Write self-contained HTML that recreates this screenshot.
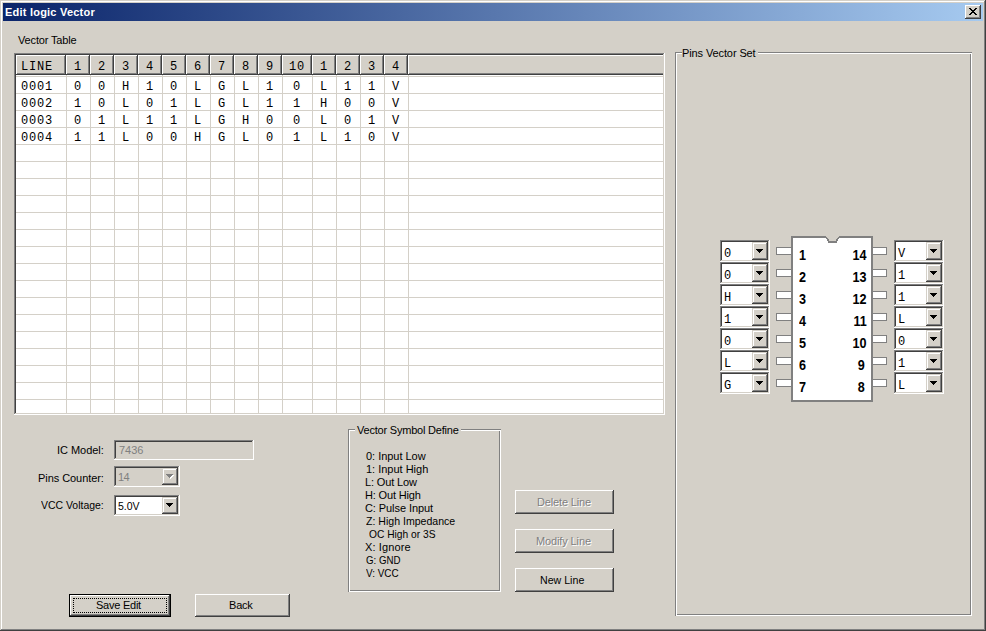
<!DOCTYPE html>
<html><head><meta charset="utf-8">
<style>
*{box-sizing:border-box;margin:0;padding:0}
html,body{width:986px;height:631px;overflow:hidden;background:#d4d0c8}
body{position:relative;font-family:"Liberation Sans",sans-serif;font-size:11px;color:#000}
.a{position:absolute}
.t{position:absolute;white-space:nowrap;line-height:13px}
.win{left:0;top:0;width:986px;height:631px;background:#d4d0c8;
 box-shadow:inset -1px -1px #404040, inset 1px 1px #d4d0c8, inset -2px -2px #808080, inset 2px 2px #fff}
.title{left:3px;top:3px;width:980px;height:18px;background:linear-gradient(to right,#0a246a,#a6caf0)}
.raised{position:absolute;background:#d4d0c8;box-shadow:inset -1px -1px #404040, inset 1px 1px #fff, inset -2px -2px #808080}
.sunken{position:absolute;box-shadow:inset -1px -1px #fff, inset 1px 1px #808080, inset -2px -2px #d4d0c8, inset 2px 2px #404040}
.etched{position:absolute;box-shadow:inset 1px 1px #808080, inset -1px -1px #fff, inset 2px 2px #fff, inset -2px -2px #808080}
.mono{font-family:"Liberation Mono",monospace;font-size:12px;letter-spacing:0.8px}
.hc{position:absolute;top:0;height:20px;line-height:20px;padding-top:2px;text-align:center;background:#d4d0c8;white-space:nowrap;
 box-shadow:inset -1px -1px #404040, inset 1px 1px #fff, inset -2px -2px #808080}
.dc{position:absolute;height:17px;line-height:17px;padding-top:3px;text-align:center;white-space:nowrap}
.dis{color:#808080;text-shadow:1px 1px 0 #fff}
.cbtn{position:absolute;background:#d4d0c8;box-shadow:inset -1px -1px #404040, inset 1px 1px #d4d0c8, inset -2px -2px #808080, inset 2px 2px #fff}
.arr{position:absolute;width:7px;height:4px}
.hl{position:absolute;height:1px;background:#d4d0c8}
.vl{position:absolute;width:1px;background:#d4d0c8}
.pin{position:absolute;width:16px;height:8px;background:#fff;border:1px solid #808080}
.pn{position:absolute;font-weight:bold;font-size:14px;line-height:14px;white-space:nowrap;transform:scaleX(0.9)}
</style></head><body>
<div class="a win"></div>
<div class="a title"></div>

<div class="t" style="left:5px;top:6px;letter-spacing:0.22px;font-family:'Liberation Sans',sans-serif;font-size:11px;font-weight:bold;color:#fff;">Edit logic Vector</div>
<div class="raised" style="left:965px;top:5px;width:16px;height:14px"></div>
<svg class="a" style="left:969px;top:8px" width="8" height="7" viewBox="0 0 8 7" shape-rendering="crispEdges"><path fill="#000" d="M0 0h2v1h-2zM6 0h2v1h-2zM1 1h2v1h-2zM5 1h2v1h-2zM2 2h4v1h-4zM3 3h2v1h-2zM2 4h4v1h-4zM1 5h2v1h-2zM5 5h2v1h-2zM0 6h2v1h-2zM6 6h2v1h-2z"/></svg>
<div class="t" style="left:18px;top:34px;letter-spacing:-0.15px;font-family:'Liberation Sans',sans-serif;font-size:11px;">Vector Table</div>
<div class="sunken" style="left:14px;top:53px;width:651px;height:362px"></div>
<div class="a mono" style="left:16px;top:55px;width:647px;height:358px;background:#fff;overflow:hidden">
<div class="hl" style="left:0;top:21px;width:647px"></div>
<div class="hl" style="left:0;top:38px;width:647px"></div>
<div class="hl" style="left:0;top:55px;width:647px"></div>
<div class="hl" style="left:0;top:72px;width:647px"></div>
<div class="hl" style="left:0;top:89px;width:647px"></div>
<div class="hl" style="left:0;top:106px;width:647px"></div>
<div class="hl" style="left:0;top:123px;width:647px"></div>
<div class="hl" style="left:0;top:140px;width:647px"></div>
<div class="hl" style="left:0;top:157px;width:647px"></div>
<div class="hl" style="left:0;top:174px;width:647px"></div>
<div class="hl" style="left:0;top:191px;width:647px"></div>
<div class="hl" style="left:0;top:208px;width:647px"></div>
<div class="hl" style="left:0;top:225px;width:647px"></div>
<div class="hl" style="left:0;top:242px;width:647px"></div>
<div class="hl" style="left:0;top:259px;width:647px"></div>
<div class="hl" style="left:0;top:276px;width:647px"></div>
<div class="hl" style="left:0;top:293px;width:647px"></div>
<div class="hl" style="left:0;top:310px;width:647px"></div>
<div class="hl" style="left:0;top:327px;width:647px"></div>
<div class="hl" style="left:0;top:344px;width:647px"></div>
<div class="vl" style="left:50px;top:20px;height:340px"></div>
<div class="vl" style="left:74px;top:20px;height:340px"></div>
<div class="vl" style="left:98px;top:20px;height:340px"></div>
<div class="vl" style="left:122px;top:20px;height:340px"></div>
<div class="vl" style="left:146px;top:20px;height:340px"></div>
<div class="vl" style="left:170px;top:20px;height:340px"></div>
<div class="vl" style="left:194px;top:20px;height:340px"></div>
<div class="vl" style="left:218px;top:20px;height:340px"></div>
<div class="vl" style="left:242px;top:20px;height:340px"></div>
<div class="vl" style="left:266px;top:20px;height:340px"></div>
<div class="vl" style="left:296px;top:20px;height:340px"></div>
<div class="vl" style="left:320px;top:20px;height:340px"></div>
<div class="vl" style="left:344px;top:20px;height:340px"></div>
<div class="vl" style="left:368px;top:20px;height:340px"></div>
<div class="vl" style="left:392px;top:20px;height:340px"></div>
<div class="hc" style="left:0px;width:50px;text-align:left;padding-left:5px">LINE</div>
<div class="hc" style="left:50px;width:24px">1</div>
<div class="hc" style="left:74px;width:24px">2</div>
<div class="hc" style="left:98px;width:24px">3</div>
<div class="hc" style="left:122px;width:24px">4</div>
<div class="hc" style="left:146px;width:24px">5</div>
<div class="hc" style="left:170px;width:24px">6</div>
<div class="hc" style="left:194px;width:24px">7</div>
<div class="hc" style="left:218px;width:24px">8</div>
<div class="hc" style="left:242px;width:24px">9</div>
<div class="hc" style="left:266px;width:30px">10</div>
<div class="hc" style="left:296px;width:24px">1</div>
<div class="hc" style="left:320px;width:24px">2</div>
<div class="hc" style="left:344px;width:24px">3</div>
<div class="hc" style="left:368px;width:24px">4</div>
<div class="hc" style="left:392px;width:300px"></div>
<div class="dc" style="left:0px;top:21px;width:50px;text-align:left;padding-left:5px">0001</div>
<div class="dc" style="left:50px;top:21px;width:24px">0</div>
<div class="dc" style="left:74px;top:21px;width:24px">0</div>
<div class="dc" style="left:98px;top:21px;width:24px">H</div>
<div class="dc" style="left:122px;top:21px;width:24px">1</div>
<div class="dc" style="left:146px;top:21px;width:24px">0</div>
<div class="dc" style="left:170px;top:21px;width:24px">L</div>
<div class="dc" style="left:194px;top:21px;width:24px">G</div>
<div class="dc" style="left:218px;top:21px;width:24px">L</div>
<div class="dc" style="left:242px;top:21px;width:24px">1</div>
<div class="dc" style="left:266px;top:21px;width:30px">0</div>
<div class="dc" style="left:296px;top:21px;width:24px">L</div>
<div class="dc" style="left:320px;top:21px;width:24px">1</div>
<div class="dc" style="left:344px;top:21px;width:24px">1</div>
<div class="dc" style="left:368px;top:21px;width:24px">V</div>
<div class="dc" style="left:0px;top:38px;width:50px;text-align:left;padding-left:5px">0002</div>
<div class="dc" style="left:50px;top:38px;width:24px">1</div>
<div class="dc" style="left:74px;top:38px;width:24px">0</div>
<div class="dc" style="left:98px;top:38px;width:24px">L</div>
<div class="dc" style="left:122px;top:38px;width:24px">0</div>
<div class="dc" style="left:146px;top:38px;width:24px">1</div>
<div class="dc" style="left:170px;top:38px;width:24px">L</div>
<div class="dc" style="left:194px;top:38px;width:24px">G</div>
<div class="dc" style="left:218px;top:38px;width:24px">L</div>
<div class="dc" style="left:242px;top:38px;width:24px">1</div>
<div class="dc" style="left:266px;top:38px;width:30px">1</div>
<div class="dc" style="left:296px;top:38px;width:24px">H</div>
<div class="dc" style="left:320px;top:38px;width:24px">0</div>
<div class="dc" style="left:344px;top:38px;width:24px">0</div>
<div class="dc" style="left:368px;top:38px;width:24px">V</div>
<div class="dc" style="left:0px;top:55px;width:50px;text-align:left;padding-left:5px">0003</div>
<div class="dc" style="left:50px;top:55px;width:24px">0</div>
<div class="dc" style="left:74px;top:55px;width:24px">1</div>
<div class="dc" style="left:98px;top:55px;width:24px">L</div>
<div class="dc" style="left:122px;top:55px;width:24px">1</div>
<div class="dc" style="left:146px;top:55px;width:24px">1</div>
<div class="dc" style="left:170px;top:55px;width:24px">L</div>
<div class="dc" style="left:194px;top:55px;width:24px">G</div>
<div class="dc" style="left:218px;top:55px;width:24px">H</div>
<div class="dc" style="left:242px;top:55px;width:24px">0</div>
<div class="dc" style="left:266px;top:55px;width:30px">0</div>
<div class="dc" style="left:296px;top:55px;width:24px">L</div>
<div class="dc" style="left:320px;top:55px;width:24px">0</div>
<div class="dc" style="left:344px;top:55px;width:24px">1</div>
<div class="dc" style="left:368px;top:55px;width:24px">V</div>
<div class="dc" style="left:0px;top:72px;width:50px;text-align:left;padding-left:5px">0004</div>
<div class="dc" style="left:50px;top:72px;width:24px">1</div>
<div class="dc" style="left:74px;top:72px;width:24px">1</div>
<div class="dc" style="left:98px;top:72px;width:24px">L</div>
<div class="dc" style="left:122px;top:72px;width:24px">0</div>
<div class="dc" style="left:146px;top:72px;width:24px">0</div>
<div class="dc" style="left:170px;top:72px;width:24px">H</div>
<div class="dc" style="left:194px;top:72px;width:24px">G</div>
<div class="dc" style="left:218px;top:72px;width:24px">L</div>
<div class="dc" style="left:242px;top:72px;width:24px">0</div>
<div class="dc" style="left:266px;top:72px;width:30px">1</div>
<div class="dc" style="left:296px;top:72px;width:24px">L</div>
<div class="dc" style="left:320px;top:72px;width:24px">1</div>
<div class="dc" style="left:344px;top:72px;width:24px">0</div>
<div class="dc" style="left:368px;top:72px;width:24px">V</div>
</div>
<div class="t" style="left:57px;top:444px;letter-spacing:-0.03px;font-family:'Liberation Sans',sans-serif;font-size:11px;">IC Model:</div>
<div class="t" style="left:38px;top:472px;letter-spacing:-0.06px;font-family:'Liberation Sans',sans-serif;font-size:11px;">Pins Counter:</div>
<div class="t" style="left:41px;top:499px;letter-spacing:0.0px;transform-origin:0 0;transform:scaleX(0.95);font-family:'Liberation Sans',sans-serif;font-size:11px;">VCC Voltage:</div>
<div class="sunken" style="left:114px;top:440px;width:140px;height:20px;background:#d4d0c8"></div>
<div class="t" style="left:119px;top:444px;letter-spacing:-0.0px;font-family:'Liberation Sans',sans-serif;font-size:11px;color:#808080;">7436</div>
<div class="sunken" style="left:114px;top:466px;width:66px;height:21px;background:#d4d0c8"></div>
<div class="cbtn" style="left:162px;top:468px;width:16px;height:17px"></div>
<svg class="arr" style="left:167px;top:475px" viewBox="0 0 7 4" shape-rendering="crispEdges"><path fill="#fff" d="M0 0h7v1h-1v1h-1v1h-1v1h-1v-1h-1v-1h-1v-1h-1z"/></svg>
<svg class="arr" style="left:166px;top:474px" viewBox="0 0 7 4" shape-rendering="crispEdges"><path fill="#808080" d="M0 0h7v1h-1v1h-1v1h-1v1h-1v-1h-1v-1h-1v-1h-1z"/></svg>
<div class="t" style="left:118px;top:471px;letter-spacing:-0.6px;font-family:'Liberation Sans',sans-serif;font-size:11px;color:#808080;">14</div>
<div class="sunken" style="left:114px;top:495px;width:66px;height:21px;background:#fff"></div>
<div class="cbtn" style="left:162px;top:497px;width:16px;height:17px"></div>
<svg class="arr" style="left:166px;top:503px" viewBox="0 0 7 4" shape-rendering="crispEdges"><path fill="#000" d="M0 0h7v1h-1v1h-1v1h-1v1h-1v-1h-1v-1h-1v-1h-1z"/></svg>
<div class="t" style="left:118px;top:500px;letter-spacing:0.0px;transform-origin:0 0;transform:scaleX(0.956);font-family:'Liberation Sans',sans-serif;font-size:11px;">5.0V</div>
<div class="etched" style="left:348px;top:429px;width:153px;height:163px"></div>
<div class="a" style="left:355px;top:425px;width:106px;height:9px;background:#d4d0c8"></div>
<div class="t" style="left:357px;top:424px;letter-spacing:-0.21px;font-family:'Liberation Sans',sans-serif;font-size:11px;">Vector Symbol Define</div>
<div class="t" style="left:366px;top:450px;letter-spacing:-0.03px;font-family:'Liberation Sans',sans-serif;font-size:11px;">0: Input Low</div>
<div class="t" style="left:366px;top:463px;letter-spacing:-0.01px;font-family:'Liberation Sans',sans-serif;font-size:11px;">1: Input High</div>
<div class="t" style="left:365px;top:476px;letter-spacing:-0.13px;font-family:'Liberation Sans',sans-serif;font-size:11px;">L: Out Low</div>
<div class="t" style="left:365px;top:489px;letter-spacing:-0.16px;font-family:'Liberation Sans',sans-serif;font-size:11px;">H: Out High</div>
<div class="t" style="left:365px;top:502px;letter-spacing:-0.08px;font-family:'Liberation Sans',sans-serif;font-size:11px;">C: Pulse Input</div>
<div class="t" style="left:366px;top:515px;letter-spacing:0.0px;transform-origin:0 0;transform:scaleX(0.96);font-family:'Liberation Sans',sans-serif;font-size:11px;">Z: High Impedance</div>
<div class="t" style="left:369px;top:528px;letter-spacing:0.0px;transform-origin:0 0;transform:scaleX(0.93);font-family:'Liberation Sans',sans-serif;font-size:11px;">OC High or 3S</div>
<div class="t" style="left:365px;top:541px;letter-spacing:0.13px;font-family:'Liberation Sans',sans-serif;font-size:11px;">X: Ignore</div>
<div class="t" style="left:366px;top:554px;letter-spacing:0.0px;transform-origin:0 0;transform:scaleX(0.88);font-family:'Liberation Sans',sans-serif;font-size:11px;">G: GND</div>
<div class="t" style="left:366px;top:567px;letter-spacing:0.0px;transform-origin:0 0;transform:scaleX(0.901);font-family:'Liberation Sans',sans-serif;font-size:11px;">V: VCC</div>
<div class="raised" style="left:515px;top:490px;width:99px;height:24px"></div>
<div class="t" style="left:537px;top:496px;letter-spacing:-0.15px;font-family:'Liberation Sans',sans-serif;font-size:11px;color:#808080;text-shadow:1px 1px 0 #fff;">Delete Line</div>
<div class="raised" style="left:515px;top:529px;width:99px;height:24px"></div>
<div class="t" style="left:536px;top:535px;letter-spacing:-0.12px;font-family:'Liberation Sans',sans-serif;font-size:11px;color:#808080;text-shadow:1px 1px 0 #fff;">Modify Line</div>
<div class="raised" style="left:515px;top:568px;width:99px;height:24px"></div>
<div class="t" style="left:540px;top:574px;letter-spacing:0.0px;transform-origin:0 0;transform:scaleX(0.966);font-family:'Liberation Sans',sans-serif;font-size:11px;">New Line</div>
<div class="a" style="left:69px;top:594px;width:102px;height:23px;border:1px solid #000"></div>
<div class="raised" style="left:70px;top:595px;width:100px;height:21px"></div>
<div class="a" style="left:73px;top:598px;width:94px;height:15px;border:1px dotted #000"></div>
<div class="t" style="left:96px;top:599px;letter-spacing:-0.24px;font-family:'Liberation Sans',sans-serif;font-size:11px;">Save Edit</div>
<div class="raised" style="left:195px;top:594px;width:95px;height:23px"></div>
<div class="t" style="left:229px;top:599px;letter-spacing:-0.21px;font-family:'Liberation Sans',sans-serif;font-size:11px;">Back</div>
<div class="etched" style="left:675px;top:52px;width:297px;height:564px"></div>
<div class="a" style="left:682px;top:48px;width:76px;height:9px;background:#d4d0c8"></div>
<div class="t" style="left:682px;top:47px;letter-spacing:-0.11px;font-family:'Liberation Sans',sans-serif;font-size:11px;">Pins Vector Set</div>
<div class="sunken" style="left:720px;top:240px;width:50px;height:22px;background:#fff"></div>
<div class="cbtn" style="left:752px;top:242px;width:16px;height:18px"></div>
<svg class="arr" style="left:756px;top:249px" viewBox="0 0 7 4" shape-rendering="crispEdges"><path fill="#000" d="M0 0h7v1h-1v1h-1v1h-1v1h-1v-1h-1v-1h-1v-1h-1z"/></svg>
<div class="t mono" style="left:724px;top:248px">0</div>
<div class="sunken" style="left:894px;top:240px;width:50px;height:22px;background:#fff"></div>
<div class="cbtn" style="left:926px;top:242px;width:16px;height:18px"></div>
<svg class="arr" style="left:930px;top:249px" viewBox="0 0 7 4" shape-rendering="crispEdges"><path fill="#000" d="M0 0h7v1h-1v1h-1v1h-1v1h-1v-1h-1v-1h-1v-1h-1z"/></svg>
<div class="t mono" style="left:898px;top:248px">V</div>
<div class="pin" style="left:776px;top:247px"></div>
<div class="pin" style="left:871px;top:247px"></div>
<div class="sunken" style="left:720px;top:262px;width:50px;height:22px;background:#fff"></div>
<div class="cbtn" style="left:752px;top:264px;width:16px;height:18px"></div>
<svg class="arr" style="left:756px;top:271px" viewBox="0 0 7 4" shape-rendering="crispEdges"><path fill="#000" d="M0 0h7v1h-1v1h-1v1h-1v1h-1v-1h-1v-1h-1v-1h-1z"/></svg>
<div class="t mono" style="left:724px;top:270px">0</div>
<div class="sunken" style="left:894px;top:262px;width:50px;height:22px;background:#fff"></div>
<div class="cbtn" style="left:926px;top:264px;width:16px;height:18px"></div>
<svg class="arr" style="left:930px;top:271px" viewBox="0 0 7 4" shape-rendering="crispEdges"><path fill="#000" d="M0 0h7v1h-1v1h-1v1h-1v1h-1v-1h-1v-1h-1v-1h-1z"/></svg>
<div class="t mono" style="left:898px;top:270px">1</div>
<div class="pin" style="left:776px;top:269px"></div>
<div class="pin" style="left:871px;top:269px"></div>
<div class="sunken" style="left:720px;top:284px;width:50px;height:22px;background:#fff"></div>
<div class="cbtn" style="left:752px;top:286px;width:16px;height:18px"></div>
<svg class="arr" style="left:756px;top:293px" viewBox="0 0 7 4" shape-rendering="crispEdges"><path fill="#000" d="M0 0h7v1h-1v1h-1v1h-1v1h-1v-1h-1v-1h-1v-1h-1z"/></svg>
<div class="t mono" style="left:724px;top:292px">H</div>
<div class="sunken" style="left:894px;top:284px;width:50px;height:22px;background:#fff"></div>
<div class="cbtn" style="left:926px;top:286px;width:16px;height:18px"></div>
<svg class="arr" style="left:930px;top:293px" viewBox="0 0 7 4" shape-rendering="crispEdges"><path fill="#000" d="M0 0h7v1h-1v1h-1v1h-1v1h-1v-1h-1v-1h-1v-1h-1z"/></svg>
<div class="t mono" style="left:898px;top:292px">1</div>
<div class="pin" style="left:776px;top:291px"></div>
<div class="pin" style="left:871px;top:291px"></div>
<div class="sunken" style="left:720px;top:306px;width:50px;height:22px;background:#fff"></div>
<div class="cbtn" style="left:752px;top:308px;width:16px;height:18px"></div>
<svg class="arr" style="left:756px;top:315px" viewBox="0 0 7 4" shape-rendering="crispEdges"><path fill="#000" d="M0 0h7v1h-1v1h-1v1h-1v1h-1v-1h-1v-1h-1v-1h-1z"/></svg>
<div class="t mono" style="left:724px;top:314px">1</div>
<div class="sunken" style="left:894px;top:306px;width:50px;height:22px;background:#fff"></div>
<div class="cbtn" style="left:926px;top:308px;width:16px;height:18px"></div>
<svg class="arr" style="left:930px;top:315px" viewBox="0 0 7 4" shape-rendering="crispEdges"><path fill="#000" d="M0 0h7v1h-1v1h-1v1h-1v1h-1v-1h-1v-1h-1v-1h-1z"/></svg>
<div class="t mono" style="left:898px;top:314px">L</div>
<div class="pin" style="left:776px;top:313px"></div>
<div class="pin" style="left:871px;top:313px"></div>
<div class="sunken" style="left:720px;top:328px;width:50px;height:22px;background:#fff"></div>
<div class="cbtn" style="left:752px;top:330px;width:16px;height:18px"></div>
<svg class="arr" style="left:756px;top:337px" viewBox="0 0 7 4" shape-rendering="crispEdges"><path fill="#000" d="M0 0h7v1h-1v1h-1v1h-1v1h-1v-1h-1v-1h-1v-1h-1z"/></svg>
<div class="t mono" style="left:724px;top:336px">0</div>
<div class="sunken" style="left:894px;top:328px;width:50px;height:22px;background:#fff"></div>
<div class="cbtn" style="left:926px;top:330px;width:16px;height:18px"></div>
<svg class="arr" style="left:930px;top:337px" viewBox="0 0 7 4" shape-rendering="crispEdges"><path fill="#000" d="M0 0h7v1h-1v1h-1v1h-1v1h-1v-1h-1v-1h-1v-1h-1z"/></svg>
<div class="t mono" style="left:898px;top:336px">0</div>
<div class="pin" style="left:776px;top:335px"></div>
<div class="pin" style="left:871px;top:335px"></div>
<div class="sunken" style="left:720px;top:350px;width:50px;height:22px;background:#fff"></div>
<div class="cbtn" style="left:752px;top:352px;width:16px;height:18px"></div>
<svg class="arr" style="left:756px;top:359px" viewBox="0 0 7 4" shape-rendering="crispEdges"><path fill="#000" d="M0 0h7v1h-1v1h-1v1h-1v1h-1v-1h-1v-1h-1v-1h-1z"/></svg>
<div class="t mono" style="left:724px;top:358px">L</div>
<div class="sunken" style="left:894px;top:350px;width:50px;height:22px;background:#fff"></div>
<div class="cbtn" style="left:926px;top:352px;width:16px;height:18px"></div>
<svg class="arr" style="left:930px;top:359px" viewBox="0 0 7 4" shape-rendering="crispEdges"><path fill="#000" d="M0 0h7v1h-1v1h-1v1h-1v1h-1v-1h-1v-1h-1v-1h-1z"/></svg>
<div class="t mono" style="left:898px;top:358px">1</div>
<div class="pin" style="left:776px;top:357px"></div>
<div class="pin" style="left:871px;top:357px"></div>
<div class="sunken" style="left:720px;top:372px;width:50px;height:22px;background:#fff"></div>
<div class="cbtn" style="left:752px;top:374px;width:16px;height:18px"></div>
<svg class="arr" style="left:756px;top:381px" viewBox="0 0 7 4" shape-rendering="crispEdges"><path fill="#000" d="M0 0h7v1h-1v1h-1v1h-1v1h-1v-1h-1v-1h-1v-1h-1z"/></svg>
<div class="t mono" style="left:724px;top:380px">G</div>
<div class="sunken" style="left:894px;top:372px;width:50px;height:22px;background:#fff"></div>
<div class="cbtn" style="left:926px;top:374px;width:16px;height:18px"></div>
<svg class="arr" style="left:930px;top:381px" viewBox="0 0 7 4" shape-rendering="crispEdges"><path fill="#000" d="M0 0h7v1h-1v1h-1v1h-1v1h-1v-1h-1v-1h-1v-1h-1z"/></svg>
<div class="t mono" style="left:898px;top:380px">L</div>
<div class="pin" style="left:776px;top:379px"></div>
<div class="pin" style="left:871px;top:379px"></div>
<div class="a" style="left:791px;top:236px;width:82px;height:166px;background:#fff;border:2px solid #808080"></div>
<svg class="a" style="left:822px;top:236px" width="20" height="8" viewBox="0 0 20 8" shape-rendering="crispEdges"><path fill="#d4d0c8" d="M4 0h13v1h-13zM5 1h11v1h-11zM6 2h9v1h-9zM7 3h7v2h-7z"/><path fill="#808080" d="M4 1h1v1h-1zM16 1h1v1h-1zM4 2h2v1h-2zM15 2h2v1h-2zM5 3h2v2h-2zM14 3h2v2h-2zM6 5h9v2h-9z"/></svg>
<div class="pn" style="left:799px;top:248px;transform-origin:0 0">1</div>
<div class="pn" style="right:119px;top:248px;transform-origin:100% 0">14</div>
<div class="pn" style="left:799px;top:270px;transform-origin:0 0">2</div>
<div class="pn" style="right:119px;top:270px;transform-origin:100% 0">13</div>
<div class="pn" style="left:799px;top:292px;transform-origin:0 0">3</div>
<div class="pn" style="right:119px;top:292px;transform-origin:100% 0">12</div>
<div class="pn" style="left:799px;top:314px;transform-origin:0 0">4</div>
<div class="pn" style="right:119px;top:314px;transform-origin:100% 0">11</div>
<div class="pn" style="left:799px;top:336px;transform-origin:0 0">5</div>
<div class="pn" style="right:119px;top:336px;transform-origin:100% 0">10</div>
<div class="pn" style="left:799px;top:358px;transform-origin:0 0">6</div>
<div class="pn" style="right:121px;top:358px;transform-origin:100% 0">9</div>
<div class="pn" style="left:799px;top:380px;transform-origin:0 0">7</div>
<div class="pn" style="right:121px;top:380px;transform-origin:100% 0">8</div>
</body></html>
